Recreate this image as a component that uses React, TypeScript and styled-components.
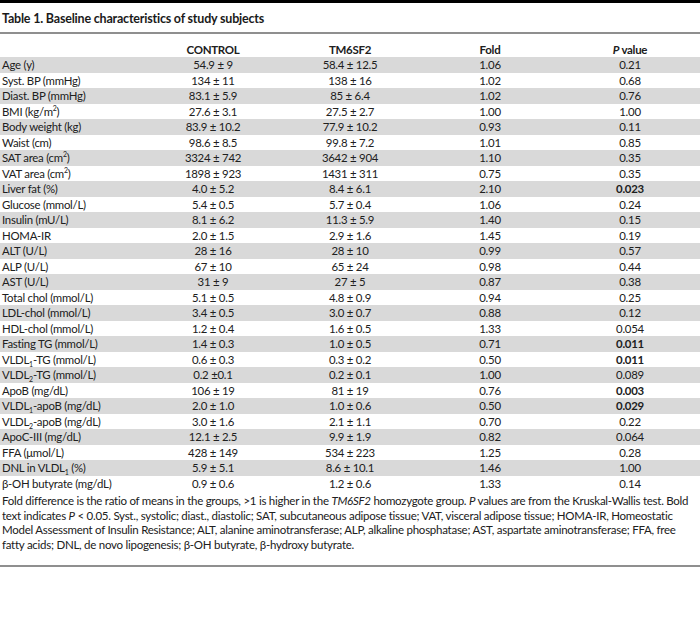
import React from "react";
import styled, { createGlobalStyle } from "styled-components";

const Global = createGlobalStyle`
  html, body { margin: 0; padding: 0; background: #fff; }
  body {
    font-family: Lato, "Liberation Sans", sans-serif;
    color: #202020;
  }
`;

const Page = styled.div`
  width: 700px;
  display: flex;
  flex-direction: column;
`;

const TopBar = styled.div`
  height: 3px;
  background: #000;
`;

const Title = styled.h1`
  margin: 0;
  height: 31px;
  padding: 2px 2px 0;
  display: flex;
  align-items: center;
  box-sizing: border-box;
  font-size: 12.5px;
  font-weight: 700;
  letter-spacing: -0.2px;
  color: #1a1a1a;
  border-bottom: 2px solid #8f8f8f;
`;

const cols = "146px 134px 140px 140px 140px";

const HeaderRow = styled.div`
  display: grid;
  grid-template-columns: ${cols};
  height: 23px;
  align-items: end;
  font-size: 11.5px;
  letter-spacing: -0.3px;
  font-weight: 700;
  line-height: 15.5px;
`;

const HeadCell = styled.div`
  text-align: center;
  white-space: nowrap;
  font-weight: 700;
`;

const Row = styled.div<{ $shade: boolean }>`
  display: grid;
  grid-template-columns: ${cols};
  height: 15.5px;
  align-items: center;
  font-size: 11.4px;
  letter-spacing: -0.25px;
  line-height: 15.5px;
  background: ${(p) => (p.$shade ? "#d9d9d9" : "#fff")};
`;

const Label = styled.div`
  padding-left: 2px;
  white-space: nowrap;
`;

const Cell = styled.div<{ $bold?: boolean }>`
  text-align: center;
  white-space: nowrap;
  font-weight: ${(p) => (p.$bold ? 700 : 400)};
`;

const Sup = styled.sup`
  font-size: 7px;
  vertical-align: 5px;
  line-height: 0;
`;

const Sub = styled.sub`
  font-size: 7px;
  vertical-align: -3px;
  line-height: 0;
`;

const Footnote = styled.p`
  margin: 0;
  padding: 3px 2px 13px;
  font-size: 11.5px;
  letter-spacing: -0.26px;
  line-height: 14.5px;
  white-space: nowrap;
  border-bottom: 2px solid #8f8f8f;
`;

type R = [React.ReactNode, string, string, string, string, boolean?];

const rows: R[] = [
  ["Age (y)", "54.9 ± 9", "58.4 ± 12.5", "1.06", "0.21"],
  ["Syst. BP (mmHg)", "134 ± 11", "138 ± 16", "1.02", "0.68"],
  ["Diast. BP (mmHg)", "83.1 ± 5.9", "85 ± 6.4", "1.02", "0.76"],
  [<>BMI (kg/m<Sup>2</Sup>)</>, "27.6 ± 3.1", "27.5 ± 2.7", "1.00", "1.00"],
  ["Body weight (kg)", "83.9 ± 10.2", "77.9 ± 10.2", "0.93", "0.11"],
  ["Waist (cm)", "98.6 ± 8.5", "99.8 ± 7.2", "1.01", "0.85"],
  [<>SAT area (cm<Sup>2</Sup>)</>, "3324 ± 742", "3642 ± 904", "1.10", "0.35"],
  [<>VAT area (cm<Sup>2</Sup>)</>, "1898 ± 923", "1431 ± 311", "0.75", "0.35"],
  ["Liver fat (%)", "4.0 ± 5.2", "8.4 ± 6.1", "2.10", "0.023", true],
  ["Glucose (mmol/L)", "5.4 ± 0.5", "5.7 ± 0.4", "1.06", "0.24"],
  ["Insulin (mU/L)", "8.1 ± 6.2", "11.3 ± 5.9", "1.40", "0.15"],
  ["HOMA-IR", "2.0 ± 1.5", "2.9 ± 1.6", "1.45", "0.19"],
  ["ALT (U/L)", "28 ± 16", "28 ± 10", "0.99", "0.57"],
  ["ALP (U/L)", "67 ± 10", "65 ± 24", "0.98", "0.44"],
  ["AST (U/L)", "31 ± 9", "27 ± 5", "0.87", "0.38"],
  ["Total chol (mmol/L)", "5.1 ± 0.5", "4.8 ± 0.9", "0.94", "0.25"],
  ["LDL-chol (mmol/L)", "3.4 ± 0.5", "3.0 ± 0.7", "0.88", "0.12"],
  ["HDL-chol (mmol/L)", "1.2 ± 0.4", "1.6 ± 0.5", "1.33", "0.054"],
  ["Fasting TG (mmol/L)", "1.4 ± 0.3", "1.0 ± 0.5", "0.71", "0.011", true],
  [<>VLDL<Sub>1</Sub>-TG (mmol/L)</>, "0.6 ± 0.3", "0.3 ± 0.2", "0.50", "0.011", true],
  [<>VLDL<Sub>2</Sub>-TG (mmol/L)</>, "0.2 ±0.1", "0.2 ± 0.1", "1.00", "0.089"],
  ["ApoB (mg/dL)", "106 ± 19", "81 ± 19", "0.76", "0.003", true],
  [<>VLDL<Sub>1</Sub>-apoB (mg/dL)</>, "2.0 ± 1.0", "1.0 ± 0.6", "0.50", "0.029", true],
  [<>VLDL<Sub>2</Sub>-apoB (mg/dL)</>, "3.0 ± 1.6", "2.1 ± 1.1", "0.70", "0.22"],
  ["ApoC-III (mg/dL)", "12.1 ± 2.5", "9.9 ± 1.9", "0.82", "0.064"],
  ["FFA (μmol/L)", "428 ± 149", "534 ± 223", "1.25", "0.28"],
  [<>DNL in VLDL<Sub>1</Sub> (%)</>, "5.9 ± 5.1", "8.6 ± 10.1", "1.46", "1.00"],
  ["β-OH butyrate (mg/dL)", "0.9 ± 0.6", "1.2 ± 0.6", "1.33", "0.14"],
];

export default function App() {
  return (
    <Page>
      <Global />
      <TopBar />
      <Title>Table 1. Baseline characteristics of study subjects</Title>
      <HeaderRow>
        <Label />
        <HeadCell>CONTROL</HeadCell>
        <HeadCell>TM6SF2</HeadCell>
        <HeadCell>Fold</HeadCell>
        <HeadCell>
          <i>P</i> value
        </HeadCell>
      </HeaderRow>
      {rows.map((r, i) => (
        <Row key={i} $shade={i % 2 === 0}>
          <Label>{r[0]}</Label>
          <Cell>{r[1]}</Cell>
          <Cell>{r[2]}</Cell>
          <Cell>{r[3]}</Cell>
          <Cell $bold={!!r[5]}>{r[4]}</Cell>
        </Row>
      ))}
      <Footnote>
        Fold difference is the ratio of means in the groups, &gt;1 is higher in the <i>TM6SF2</i> homozygote group. <i>P</i> values are from the Kruskal-Wallis test. Bold
        <br />
        text indicates <i>P</i> &lt; 0.05. Syst., systolic; diast., diastolic; SAT, subcutaneous adipose tissue; VAT, visceral adipose tissue; HOMA-IR, Homeostatic
        <br />
        Model Assessment of Insulin Resistance; ALT, alanine aminotransferase; ALP, alkaline phosphatase; AST, aspartate aminotransferase; FFA, free
        <br />
        fatty acids; DNL, de novo lipogenesis; β-OH butyrate, β-hydroxy butyrate.
      </Footnote>
    </Page>
  );
}
